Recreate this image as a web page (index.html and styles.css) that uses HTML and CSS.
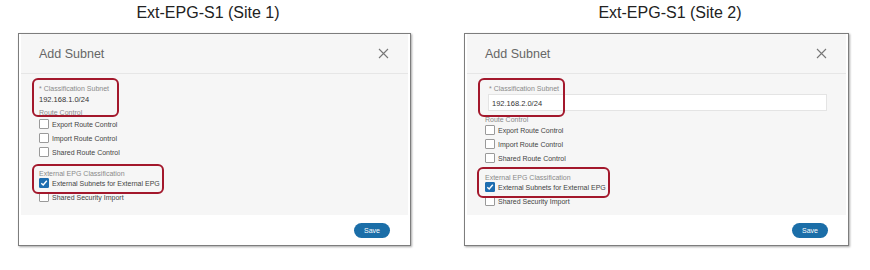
FILE: index.html
```html
<!DOCTYPE html>
<html lang="en">
<head>
    <meta charset="UTF-8">
    <title>Add Subnet - Site 1 / Site 2</title>
    <link rel="stylesheet" href="styles.css">
</head>
<body>
    <div class="page">
        <div class="panel panel-left">
            <div class="site-title">Ext-EPG-S1 (Site 1)</div>
            <div class="dialog">
                <div class="dialog-header">
                    <span class="dialog-title">Add Subnet</span>
                    <svg class="close" width="11" height="11" viewBox="0 0 11 11"><path d="M1 1L10 10M10 1L1 10" stroke="#777" stroke-width="1.1"/></svg>
                </div>
                <div class="dialog-body">
                    <div class="field-label">* Classification Subnet</div>
                    <div class="subnet-value plain">192.168.1.0/24</div>
                    <div class="group-label route">Route Control</div>
                    <label class="check"><span class="box"></span>Export Route Control</label>
                    <label class="check"><span class="box"></span>Import Route Control</label>
                    <label class="check"><span class="box"></span>Shared Route Control</label>
                    <div class="group-label ext">External EPG Classification</div>
                    <label class="check"><span class="box checked"><svg width="8" height="8" viewBox="0 0 8 8"><path d="M1.3 4.2L3.2 6L6.8 1.8" stroke="#fff" stroke-width="1.4" fill="none"/></svg></span>External Subnets for External EPG</label>
                    <label class="check"><span class="box"></span>Shared Security Import</label>
                </div>
                <div class="dialog-footer">
                    <button class="save">Save</button>
                </div>
                <div class="highlight hl-subnet"></div>
                <div class="highlight hl-ext"></div>
            </div>
        </div>

        <div class="panel panel-right">
            <div class="site-title">Ext-EPG-S1 (Site 2)</div>
            <div class="dialog">
                <div class="dialog-header">
                    <span class="dialog-title">Add Subnet</span>
                    <svg class="close" width="11" height="11" viewBox="0 0 11 11"><path d="M1 1L10 10M10 1L1 10" stroke="#777" stroke-width="1.1"/></svg>
                </div>
                <div class="dialog-body">
                    <div class="field-label indent">* Classification Subnet</div>
                    <div class="subnet-value boxed">192.168.2.0/24</div>
                    <div class="group-label route-r">Route Control</div>
                    <label class="check"><span class="box"></span>Export Route Control</label>
                    <label class="check"><span class="box"></span>Import Route Control</label>
                    <label class="check"><span class="box"></span>Shared Route Control</label>
                    <div class="group-label ext-r">External EPG Classification</div>
                    <label class="check"><span class="box checked"><svg width="8" height="8" viewBox="0 0 8 8"><path d="M1.3 4.2L3.2 6L6.8 1.8" stroke="#fff" stroke-width="1.4" fill="none"/></svg></span>External Subnets for External EPG</label>
                    <label class="check"><span class="box"></span>Shared Security Import</label>
                </div>
                <div class="dialog-footer">
                    <button class="save">Save</button>
                </div>
                <div class="highlight hl-subnet"></div>
                <div class="highlight hl-ext-r"></div>
            </div>
        </div>
    </div>
</body>
</html>
```

FILE: styles.css
```css
/* Two side-by-side "Add Subnet" dialogs */
body {
    margin: 0;
    background-color: #fff;
    font-family: "Liberation Sans", Arial, sans-serif;
    color: #333;
}

.page {
    display: flex;
    width: 870px;
    height: 270px;
}

.panel-left {
    margin-left: 18px;
    width: 393px;
}

.panel-right {
    margin-left: 53px;
    width: 385px;
}

.site-title {
    height: 33px;
    line-height: 26px;
    font-size: 16px;
    color: #222;
    text-align: center;
}

.panel-left .site-title {
    padding-right: 13px;
}

.panel-right .site-title {
    padding-left: 27px;
}

.dialog {
    position: relative;
    height: 213px;
    border: 1px solid #7d7d7d;
    box-shadow: 1px 1px 2px rgba(0, 0, 0, 0.35);
    padding: 0 2px;
    box-sizing: border-box;
    background-color: #fff;
    display: flex;
    flex-direction: column;
}

.dialog-header {
    height: 40px;
    background-color: #f6f6f6;
    border-bottom: 1px solid #e6e6e6;
    display: flex;
    align-items: center;
    justify-content: space-between;
    padding: 0 19px 0 18px;
    box-sizing: border-box;
}

.dialog-title {
    font-size: 12.5px;
    color: #666;
}

.dialog-body {
    flex: 1;
    background-color: #f6f6f6;
    padding: 11px 19px 0 18px;
}

.field-label {
    font-size: 7px;
    line-height: 8px;
    color: #8a8a8a;
}

.field-label.indent {
    margin-left: 4px;
}

.subnet-value {
    font-size: 7.5px;
    color: #333;
}

.subnet-value.plain {
    margin-top: 2px;
    height: 10px;
    line-height: 10px;
}

.subnet-value.boxed {
    margin: 1px 0 0 3px;
    height: 17px;
    line-height: 17px;
    padding-left: 3px;
    background-color: #fff;
    border: 1px solid #e4e4e4;
    box-sizing: border-box;
}

.group-label {
    font-size: 7px;
    line-height: 8px;
    color: #8a8a8a;
}

.group-label.route {
    margin-top: 4px;
}

.group-label.route-r {
    margin-top: 5px;
    margin-bottom: -1px;
}

.group-label.ext {
    margin-top: 11px;
    margin-bottom: -2px;
}

.group-label.ext-r {
    margin-top: 9px;
    margin-bottom: -2px;
}

.check {
    display: flex;
    align-items: center;
    height: 14px;
    font-size: 7px;
    color: #444;
}

.box {
    width: 10px;
    height: 10px;
    box-sizing: border-box;
    border: 1px solid #9a9a9a;
    border-radius: 1px;
    background-color: #fff;
    margin-right: 3px;
    display: flex;
    align-items: center;
    justify-content: center;
}

.box.checked {
    background-color: #1d6db0;
    border-color: #1d6db0;
}

.dialog-footer {
    height: 30px;
    display: flex;
    align-items: center;
    justify-content: flex-end;
    padding-right: 18px;
}

.save {
    width: 36px;
    height: 15px;
    border: none;
    border-radius: 8px;
    background-color: #1b6ea8;
    color: #fff;
    font-family: "Liberation Sans", Arial, sans-serif;
    font-size: 7px;
    padding: 0;
}

/* red callout boxes drawn over the form */
.highlight {
    position: absolute;
    border: 2.5px solid #a3182c;
    border-radius: 6px;
    box-sizing: border-box;
}

.hl-subnet {
    left: 13px;
    top: 44px;
    width: 87px;
    height: 39px;
}

.hl-ext {
    left: 13px;
    top: 130px;
    width: 132px;
    height: 30px;
}

.hl-ext-r {
    left: 12px;
    top: 133px;
    width: 133px;
    height: 31px;
}
```
